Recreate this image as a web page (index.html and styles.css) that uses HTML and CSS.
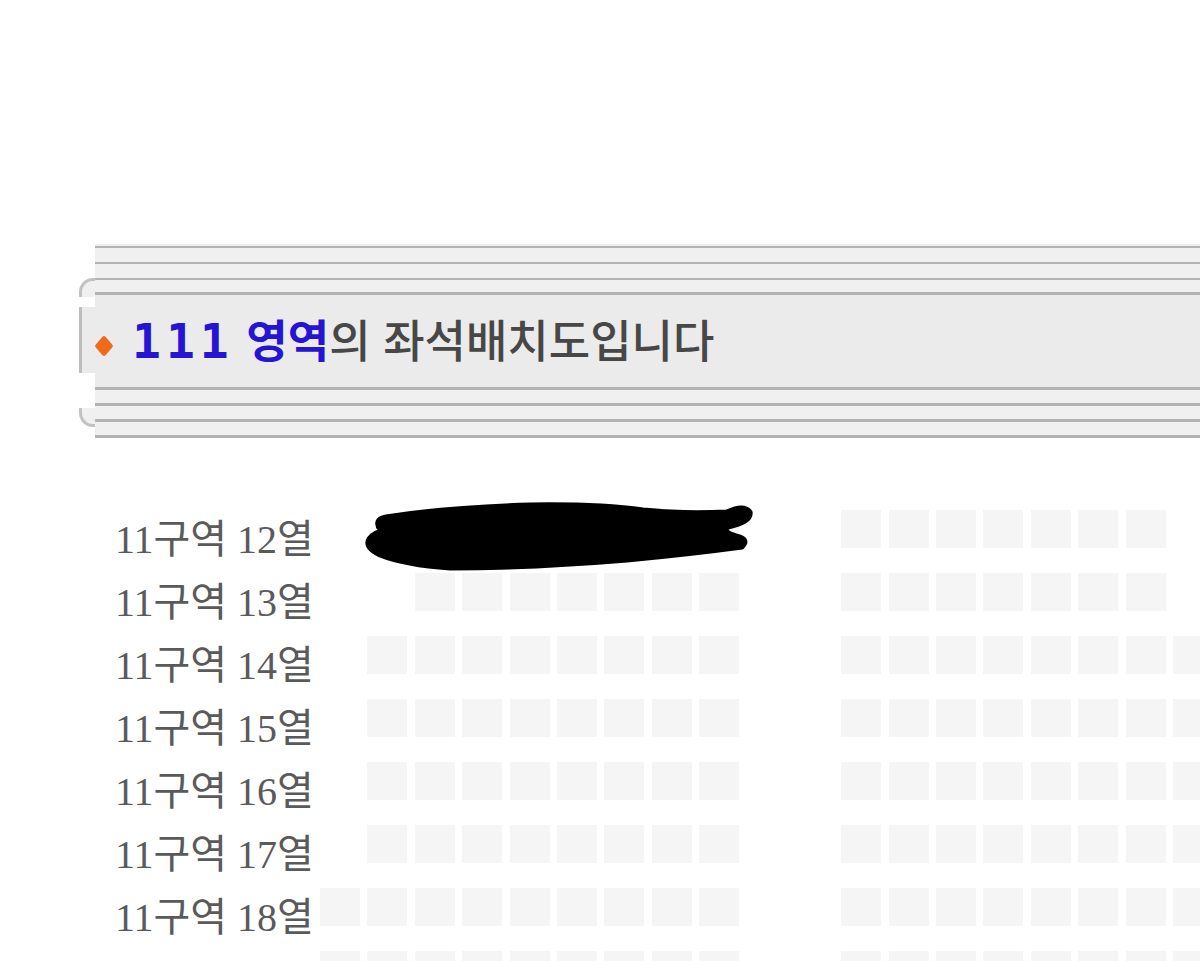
FILE: index.html
```html
<!DOCTYPE html>
<html lang="ko">
<head>
    <meta charset="UTF-8">
    <meta name="viewport" content="width=device-width, initial-scale=1.0">
    <title>111 영역 좌석배치도</title>
    <link rel="stylesheet" href="styles.css">
</head>
<body>
    <div class="area-header">
        <div class="header-cap">
            <div class="cap-corner"></div>
            <div class="cap-mid"></div>
            <div class="cap-corner bottom"></div>
        </div>
        <div class="header-bar">
            <div class="stripes"></div>
            <div class="header-body">
                <svg class="bullet" viewBox="0 0 18 20">
                    <polygon points="9,2.5 15.5,10 9,17.5 2.5,10" fill="#f06a1c" stroke="#f06a1c" stroke-width="4.5" stroke-linejoin="round"/>
                </svg>
                <h2 class="area-title"><span class="area-no">111</span> <span class="area-name">영역</span>의 좌석배치도입니다</h2>
            </div>
            <div class="stripes bottom"></div>
        </div>
    </div>

    <div class="seat-map" id="seatMap">
        <svg class="redact" viewBox="0 0 400 80">
            <path d="M18 30 Q16 24 26 22 Q90 12 170 10 Q240 9 283 15 Q320 19 367 17 Q384 9 390 17 Q392 27 368 32 Q362 37 376 41 Q390 44 382 52 Q330 59 267 65 Q170 73 90 73 Q45 70 20 60 Q4 52 9 44 Q14 37 26 35 Q18 35 18 30 Z"
                  fill="#000" stroke="#000" stroke-width="5" stroke-linejoin="round"/>
        </svg>
    </div>

    <script>
        // o = 좌석, . = 빈 칸
        const rows = [
            { no: 12, seats: '..ooooooo..ooooooo.' },
            { no: 13, seats: '..ooooooo..ooooooo.' },
            { no: 14, seats: '.oooooooo..oooooooo' },
            { no: 15, seats: '.oooooooo..oooooooo' },
            { no: 16, seats: '.oooooooo..oooooooo' },
            { no: 17, seats: '.oooooooo..oooooooo' },
            { no: 18, seats: 'ooooooooo..oooooooo' },
            { no: 19, seats: 'ooooooooo..oooooooo', hideLabel: true }
        ];

        function renderRows() {
            const map = document.getElementById('seatMap');

            rows.forEach(row => {
                const div = document.createElement('div');
                div.className = 'seat-row';

                const cells = row.seats.split('').map(c =>
                    `<span class="seat ${c === '.' ? 'empty' : ''}"></span>`
                ).join('');

                const label = row.hideLabel ? '' : `11구역 ${row.no}열`;

                div.innerHTML = `
                    <span class="row-label">${label}</span>
                    <div class="seats">${cells}</div>
                `;

                map.appendChild(div);
            });
        }

        renderRows();
    </script>
</body>
</html>
```

FILE: styles.css
```css
:root {
    --line-color: #b3b3b3;
    --band-color: #f0f0f0;
    --bar-color: #ebebeb;
    --title-blue: #2514d4;
    --seat-color: #f5f5f5;
}

* {
    margin: 0;
    padding: 0;
    box-sizing: border-box;
}

html, body {
    overflow: hidden;
}

body {
    width: 1200px;
    height: 961px;
    background-color: #fff;
    font-family: "Noto Sans CJK KR", sans-serif;
}

/* 영역 제목 바 */
.area-header {
    display: flex;
    margin: 244px 0 0 79px;
}

.header-cap {
    width: 16px;
    display: flex;
    flex-direction: column;
    padding-top: 34px;
}

.cap-corner {
    height: 19px;
    border-left: 3px solid #c2c2c2;
    border-top: 3px solid #c2c2c2;
    border-top-left-radius: 14px;
    background-color: var(--band-color);
}

.cap-corner.bottom {
    border-top: none;
    border-bottom: 3px solid #c2c2c2;
    border-radius: 0 0 0 14px;
}

.cap-mid {
    height: 66px;
    margin: 10px 0 35px;
    border-left: 3px solid #bdbdbd;
    background-color: var(--bar-color);
}

.header-bar {
    flex: 1;
}

.stripes {
    height: 48px;
    background: repeating-linear-gradient(to bottom,
        var(--band-color) 0 2px,
        var(--line-color) 2px 4px,
        var(--band-color) 4px 16px);
}

.stripes.bottom {
    background: repeating-linear-gradient(to bottom,
        var(--band-color) 0 13px,
        var(--line-color) 13px 16px);
}

.header-body {
    height: 98px;
    border-top: 3px solid var(--line-color);
    border-bottom: 3px solid var(--line-color);
    background-color: var(--bar-color);
    display: flex;
    align-items: center;
}

.bullet {
    width: 18px;
    height: 20px;
    margin: 10px 19px 0 0;
    flex-shrink: 0;
}

.area-title {
    font-size: 45px;
    font-weight: 500;
    line-height: 1.2;
    color: #474747;
    white-space: nowrap;
}

.area-no {
    font-family: "DejaVu Sans Mono", monospace;
    font-weight: bold;
    font-size: 48px;
    letter-spacing: 5px;
    color: var(--title-blue);
}

.area-name {
    font-weight: bold;
    color: var(--title-blue);
}

/* 좌석 배치 */
.seat-map {
    position: relative;
    margin: 72px 0 0 115px;
    font-family: "Liberation Serif", "Noto Sans CJK KR", serif;
}

.seat-row {
    display: flex;
    height: 63px;
}

.row-label {
    width: 205px;
    flex-shrink: 0;
    font-size: 40px;
    line-height: 59px;
    color: #5a5a5a;
    white-space: nowrap;
}

.seats {
    display: grid;
    grid-template-columns: repeat(19, 40px);
    column-gap: 7.4px;
    height: 38px;
}

.seat {
    background-color: var(--seat-color);
}

.seat.empty {
    background: none;
}

.redact {
    position: absolute;
    left: 245px;
    top: -15px;
    width: 400px;
    height: 80px;
    z-index: 1;
}
```
